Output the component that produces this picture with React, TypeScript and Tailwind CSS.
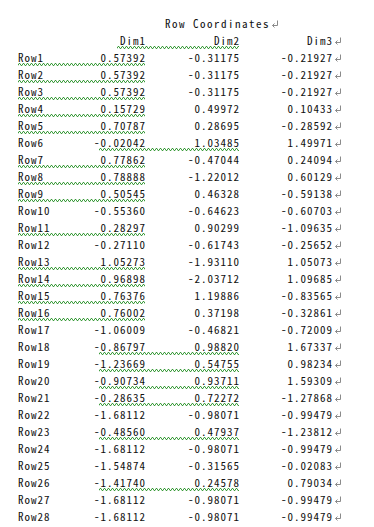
import { useId } from "react";

type Mark = "none" | "left" | "mid";

const rows: [string, string, string, string, Mark][] = [
  ["Row1", "0.57392", "-0.31175", "-0.21927", "left"],
  ["Row2", "0.57392", "-0.31175", "-0.21927", "left"],
  ["Row3", "0.57392", "-0.31175", "-0.21927", "left"],
  ["Row4", "0.15729", "0.49972", "0.10433", "left"],
  ["Row5", "0.70787", "0.28695", "-0.28592", "left"],
  ["Row6", "-0.02042", "1.03485", "1.49971", "mid"],
  ["Row7", "0.77862", "-0.47044", "0.24094", "left"],
  ["Row8", "0.78888", "-1.22012", "0.60129", "left"],
  ["Row9", "0.50545", "0.46328", "-0.59138", "left"],
  ["Row10", "-0.55360", "-0.64623", "-0.60703", "none"],
  ["Row11", "0.28297", "0.90299", "-1.09635", "left"],
  ["Row12", "-0.27110", "-0.61743", "-0.25652", "none"],
  ["Row13", "1.05273", "-1.93110", "1.05073", "left"],
  ["Row14", "0.96898", "-2.03712", "1.09685", "left"],
  ["Row15", "0.76376", "1.19886", "-0.83565", "left"],
  ["Row16", "0.76002", "0.37198", "-0.32861", "left"],
  ["Row17", "-1.06009", "-0.46821", "-0.72009", "none"],
  ["Row18", "-0.86797", "0.98820", "1.67337", "mid"],
  ["Row19", "-1.23669", "0.54755", "0.98234", "mid"],
  ["Row20", "-0.90734", "0.93711", "1.59309", "mid"],
  ["Row21", "-0.28635", "0.72272", "-1.27868", "mid"],
  ["Row22", "-1.68112", "-0.98071", "-0.99479", "none"],
  ["Row23", "-0.48560", "0.47937", "-1.23812", "mid"],
  ["Row24", "-1.68112", "-0.98071", "-0.99479", "none"],
  ["Row25", "-1.54874", "-0.31565", "-0.02083", "none"],
  ["Row26", "-1.41740", "0.24578", "0.79034", "mid"],
  ["Row27", "-1.68112", "-0.98071", "-0.99479", "none"],
  ["Row28", "-1.68112", "-0.98071", "-0.99479", "none"],
];

// Word's paragraph mark
function ParaMark() {
  return (
    <svg width="8" height="8" viewBox="0 0 8 8" className="ml-[1px] mt-[3px] shrink-0">
      <path d="M6.5 0.5 V5.5 H1.5" fill="none" stroke="#8a8a8a" strokeWidth="1" />
      <path d="M3.5 3.5 L1.5 5.5 L3.5 7.5" fill="none" stroke="#8a8a8a" strokeWidth="1" />
    </svg>
  );
}

// green grammar squiggle
function Squiggle({ className }: { className: string }) {
  const id = useId();
  return (
    <svg height="3" className={"absolute bottom-[2px] " + className}>
      <defs>
        <pattern id={id} width="4" height="3" patternUnits="userSpaceOnUse">
          <path d="M0 2.5 L1 0.5 L2 0.5 L3 2.5 L4 2.5" fill="none" stroke="#3c9b3c" strokeWidth="1" />
        </pattern>
      </defs>
      <rect width="100%" height="3" fill={`url(#${id})`} />
    </svg>
  );
}

export default function App() {
  return (
    <div className="min-h-screen w-[374px] bg-white pt-[17px] text-[11px] leading-[13px] tracking-[1px] text-[#111] font-['Noto_Sans_Mono_CJK_JP','Noto_Sans_Mono','DejaVu_Sans_Mono',monospace]">
      <div className="flex h-[17px] pl-[165px]">
        <span className="tracking-[1.5px]">Row Coordinates</span>
        <ParaMark />
      </div>

      {/* header */}
      <div className="relative flex h-[17px] pl-[18px]">
        <div className="w-[40px]" />
        <div className="w-[88px] text-right">Dim1</div>
        <div className="w-[94px] text-right">Dim2</div>
        <div className="w-[93px] text-right">Dim3</div>
        <ParaMark />
        <Squiggle className="left-[117px] w-[122px]" />
      </div>

      {rows.map(([name, a, b, c, mark]) => (
        <div key={name} className="relative flex h-[17px] pl-[18px]">
          <div className="w-[40px]">{name}</div>
          <div className="w-[88px] text-right">{a}</div>
          <div className="w-[94px] text-right">{b}</div>
          <div className="w-[93px] text-right">{c}</div>
          <ParaMark />
          {mark === "left" && <Squiggle className="left-[18px] w-[127px]" />}
          {mark === "mid" && <Squiggle className="left-[99px] w-[140px]" />}
        </div>
      ))}
    </div>
  );
}
